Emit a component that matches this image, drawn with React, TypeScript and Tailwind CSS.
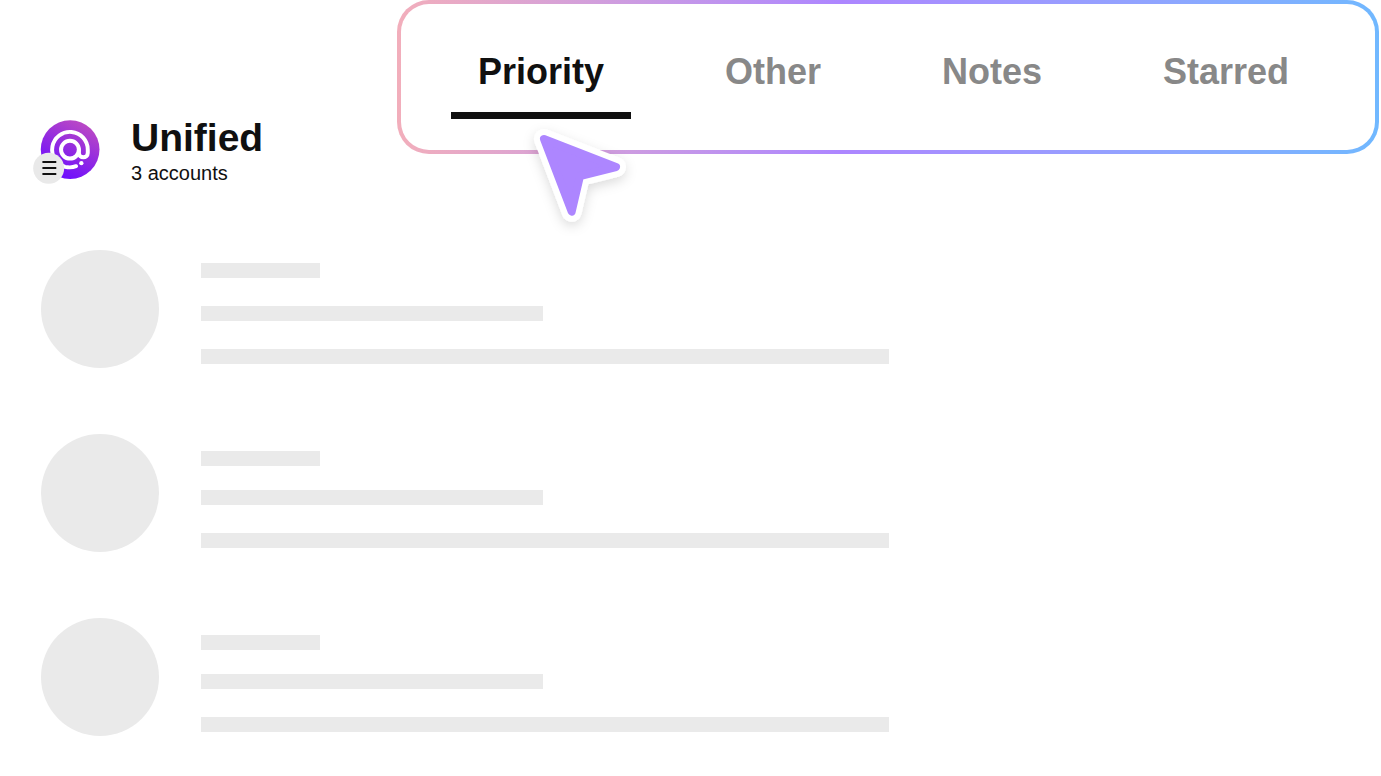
const tabs = ["Priority", "Other", "Notes", "Starred"];

const messages = [
  { id: 1, titleSpacing: "pt-[13px]", subtitleSpacing: "mt-7" },
  { id: 2, titleSpacing: "pt-[17px]", subtitleSpacing: "mt-6" },
  { id: 3, titleSpacing: "pt-[17px]", subtitleSpacing: "mt-6" },
];

function AccountIcon() {
  return (
    <svg viewBox="38 44 202 194" className="h-16 w-[67px] shrink-0" fill="none" aria-hidden="true">
      <defs>
        <linearGradient id="account" x1="205" y1="65" x2="125" y2="220" gradientUnits="userSpaceOnUse">
          <stop offset="0" stopColor="#b847c6" />
          <stop offset="0.45" stopColor="#952cdf" />
          <stop offset="1" stopColor="#6c0cff" />
        </linearGradient>
      </defs>
      <circle cx="150" cy="133.500" r="89" fill="url(#account)" />
      <g stroke="#fff" strokeWidth="12" strokeLinecap="round">
        <circle cx="149.500" cy="134" r="27" />
        <path d="M176.500 134V144C176.500 161 203.500 161 203.500 144V134A54 54 0 1 0 135 186Q153 190 168 184" />
      </g>
      <circle cx="184" cy="175" r="6.500" fill="#fff" />
      <circle cx="85" cy="190" r="47" fill="#e9e9e9" />
      <path d="M66 171.500H108M66 189.500H108M66 207.500H108" stroke="#111" strokeWidth="6" />
    </svg>
  );
}

function Pointer() {
  return (
    <svg
      viewBox="520 115 124 126"
      className="pointer-events-none absolute top-[115px] left-[123px] h-[126px] w-[124px]"
      aria-hidden="true"
    >
      <defs>
        <filter id="shadow" x="-30%" y="-30%" width="160%" height="170%">
          <feDropShadow dx="0" dy="4" stdDeviation="6" floodColor="#000" floodOpacity="0.14" />
        </filter>
      </defs>
      <path
        d="M544 139 616 167 580 176 571.700 211.700Z"
        fill="#fff"
        stroke="#fff"
        strokeWidth="20"
        strokeLinejoin="round"
        filter="url(#shadow)"
      />
      <path
        d="M544 139 616 167 580 176 571.700 211.700Z"
        fill="#ad86ff"
        stroke="#ad86ff"
        strokeWidth="8"
        strokeLinejoin="round"
      />
    </svg>
  );
}

export default function App() {
  return (
    <div className="bg-white font-['Liberation_Sans',Arial,sans-serif] text-[#101010]">
      <header className="flex items-start pr-0.5">
        <div className="flex w-[397px] shrink-0 items-start gap-[31px] pt-[120px] pl-[33px]">
          <AccountIcon />
          <div className="-mt-1">
            <h1 className="text-[39px] leading-[44px] font-bold">Unified</h1>
            <p className="mt-px text-xl leading-6">3 accounts</p>
          </div>
        </div>
        <div className="relative min-w-0 flex-1">
          <div className="rounded-[32px] bg-linear-to-r from-[#f2aebb] via-[#ad86ff] via-45% to-[#70b8ff] p-1">
            <nav
              aria-label="Inbox"
              className="flex h-[146px] items-start justify-between rounded-[28px] bg-white pt-[46px] pr-[59px] pl-[50px]"
            >
              {tabs.map((tab, i) => (
                <button
                  key={tab}
                  type="button"
                  aria-current={i === 0 ? "page" : undefined}
                  className={
                    i === 0
                      ? "border-b-[7px] border-[#101010] px-[27px] pb-[18px] text-4xl leading-[44px] font-bold text-[#101010]"
                      : "border-b-[7px] border-transparent px-[27px] pb-[18px] text-4xl leading-[44px] font-bold text-[#888]"
                  }
                >
                  {tab}
                </button>
              ))}
            </nav>
          </div>
          <Pointer />
        </div>
      </header>
      <main className="flex flex-col gap-[66px] px-[41px] pt-[65px] pb-10">
        {messages.map((m) => (
          <div key={m.id} className="flex gap-[42px]">
            <div className="size-[118px] shrink-0 rounded-full bg-[#eaeaea]" />
            <div className={`min-w-0 flex-1 ${m.titleSpacing}`}>
              <div className="h-[15px] w-full max-w-[119px] bg-[#eaeaea]" />
              <div className={`h-[15px] w-full max-w-[342px] bg-[#eaeaea] ${m.subtitleSpacing}`} />
              <div className="mt-7 h-[15px] w-full max-w-[688px] bg-[#eaeaea]" />
            </div>
          </div>
        ))}
      </main>
    </div>
  );
}
